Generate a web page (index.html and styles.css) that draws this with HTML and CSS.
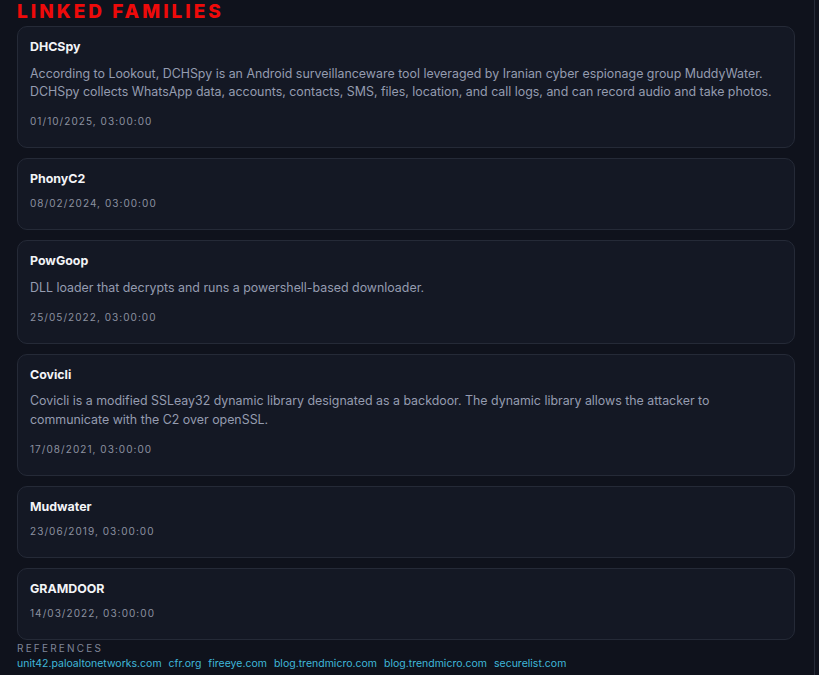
FILE: index.html
```html
<!DOCTYPE html>
<html>
<head>
<meta charset="utf-8">
<link rel="stylesheet" href="styles.css">
</head>
<body>
<div class="page">
  <main class="panel">
    <h2 class="section-title">LINKED FAMILIES</h2>
    <div class="family-list">
      <div class="card">
        <div class="card-title">DHCSpy</div>
        <p class="card-desc">According to Lookout, DCHSpy is an Android surveillanceware tool leveraged by Iranian cyber espionage group MuddyWater. DCHSpy collects WhatsApp data, accounts, contacts, SMS, files, location, and call logs, and can record audio and take photos.</p>
        <div class="card-date">01/10/2025, 03:00:00</div>
      </div>
      <div class="card">
        <div class="card-title">PhonyC2</div>
        <div class="card-date">08/02/2024, 03:00:00</div>
      </div>
      <div class="card">
        <div class="card-title">PowGoop</div>
        <p class="card-desc">DLL loader that decrypts and runs a powershell-based downloader.</p>
        <div class="card-date">25/05/2022, 03:00:00</div>
      </div>
      <div class="card">
        <div class="card-title">Covicli</div>
        <p class="card-desc">Covicli is a modified SSLeay32 dynamic library designated as a backdoor. The dynamic library allows the attacker to communicate with the C2 over openSSL.</p>
        <div class="card-date">17/08/2021, 03:00:00</div>
      </div>
      <div class="card">
        <div class="card-title">Mudwater</div>
        <div class="card-date">23/06/2019, 03:00:00</div>
      </div>
      <div class="card">
        <div class="card-title">GRAMDOOR</div>
        <div class="card-date">14/03/2022, 03:00:00</div>
      </div>
    </div>
    <div class="refs">
      <div class="refs-label">REFERENCES</div>
      <div class="refs-links">
        <a href="#">unit42.paloaltonetworks.com</a>
        <a href="#">cfr.org</a>
        <a href="#">fireeye.com</a>
        <a href="#">blog.trendmicro.com</a>
        <a href="#">blog.trendmicro.com</a>
        <a href="#">securelist.com</a>
      </div>
    </div>
  </main>
</div>
</body>
</html>
```

FILE: styles.css
```css
* { box-sizing: border-box; }
html, body {
  margin: 0;
  padding: 0;
  background: #0f121c;
  font-family: Inter, "Noto Sans", sans-serif;
  height: 100%;
  overflow: hidden;
}
.page {
  width: 815px;
  height: 675px;
  border-right: 1px solid #262b38;
}
.panel {
  padding: 0 19px 0 17px;
}
.section-title {
  margin: 0;
  padding-top: 1px;
  height: 26px;
  font-size: 19px;
  line-height: 22px;
  font-weight: 800;
  letter-spacing: 3px;
  color: #ee0a0a;
}
.family-list {
  display: flex;
  flex-direction: column;
  gap: 10px;
}
.card {
  background: #141824;
  border: 1px solid #252a37;
  border-radius: 10px;
  padding: 12px 12px 18px 12px;
  display: flex;
  flex-direction: column;
  gap: 8px;
}
.card-title {
  font-size: 12.4px;
  line-height: 16px;
  font-weight: 700;
  color: #f3f4f7;
}
.card-desc {
  margin: 1.5px 0 3.5px 0;
  font-size: 12.4px;
  line-height: 18.5px;
  color: #959cb0;
}
.card-date {
  font-size: 10px;
  line-height: 16px;
  letter-spacing: 1.05px;
  color: #8c91a0;
}
.refs {
  margin-top: 1px;
}
.refs-label {
  font-size: 10px;
  line-height: 14px;
  letter-spacing: 2.2px;
  color: #7f8597;
}
.refs-links {
  display: flex;
  gap: 7px;
  font-size: 10.5px;
  line-height: 17px;
}
.refs-links a {
  color: #3fb8da;
  text-decoration: none;
}
```
